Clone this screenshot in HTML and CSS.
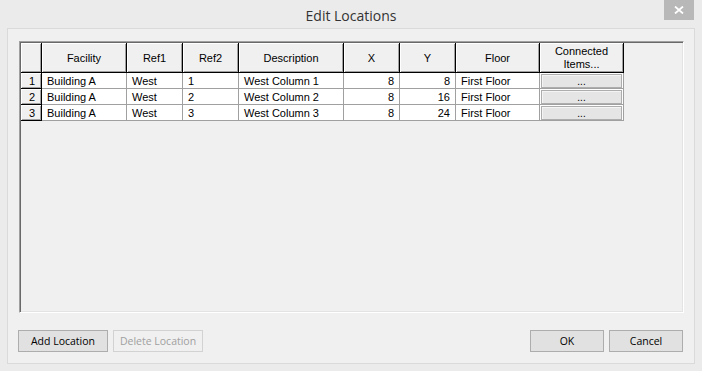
FILE: index.html
```html
<!DOCTYPE html>
<html>
<head>
<meta charset="utf-8">
<link rel="stylesheet" href="styles.css">
</head>
<body>
<div class="window">
  <div class="titlebar">
    <span class="title">Edit Locations</span>
    <div class="close">
      <svg width="10" height="8" viewBox="0 0 10 8"><path d="M1 0.5 L9 7.5 M9 0.5 L1 7.5" stroke="#fff" stroke-width="1.8"/></svg>
    </div>
  </div>
  <div class="client">
    <div class="grid">
      <div class="row head">
        <div class="c rh hc"></div>
        <div class="c w85 hc">Facility</div>
        <div class="c w56 hc">Ref1</div>
        <div class="c w56 hc">Ref2</div>
        <div class="c w105 hc">Description</div>
        <div class="c w56 hc">X</div>
        <div class="c w56 hc">Y</div>
        <div class="c w84 hc">Floor</div>
        <div class="c w84 hc">Connected<br>Items...</div>
      </div>
      <div class="row">
        <div class="c rh rn">1</div>
        <div class="c w85 d">Building A</div>
        <div class="c w56 d">West</div>
        <div class="c w56 d">1</div>
        <div class="c w105 d">West Column 1</div>
        <div class="c w56 d num">8</div>
        <div class="c w56 d num">8</div>
        <div class="c w84 d">First Floor</div>
        <div class="c w84 d bc"><div class="cellbtn">...</div></div>
      </div>
      <div class="row">
        <div class="c rh rn">2</div>
        <div class="c w85 d">Building A</div>
        <div class="c w56 d">West</div>
        <div class="c w56 d">2</div>
        <div class="c w105 d">West Column 2</div>
        <div class="c w56 d num">8</div>
        <div class="c w56 d num">16</div>
        <div class="c w84 d">First Floor</div>
        <div class="c w84 d bc"><div class="cellbtn">...</div></div>
      </div>
      <div class="row">
        <div class="c rh rn">3</div>
        <div class="c w85 d">Building A</div>
        <div class="c w56 d">West</div>
        <div class="c w56 d">3</div>
        <div class="c w105 d">West Column 3</div>
        <div class="c w56 d num">8</div>
        <div class="c w56 d num">24</div>
        <div class="c w84 d">First Floor</div>
        <div class="c w84 d bc"><div class="cellbtn">...</div></div>
      </div>
    </div>
    <div class="buttons">
      <div class="btn wide">Add Location</div>
      <div class="btn wide disabled">Delete Location</div>
      <div class="spacer"></div>
      <div class="btn narrow">OK</div>
      <div class="btn narrow">Cancel</div>
    </div>
  </div>
</div>
</body>
</html>
```
FILE: styles.css
```css
html, body {
  margin: 0;
  padding: 0;
}
body {
  width: 702px;
  height: 371px;
  overflow: hidden;
  background: #ebebeb;
}
.window {
  width: 702px;
  height: 371px;
  background: #ebebeb;
  display: flex;
  flex-direction: column;
  box-sizing: border-box;
}
.titlebar {
  height: 28px;
  flex: none;
  position: relative;
  display: flex;
  justify-content: center;
  align-items: center;
}
.title {
  font-family: "Open Sans", "Noto Sans", sans-serif;
  font-size: 14px;
  color: #333;
  padding-top: 2px;
}
.close {
  position: absolute;
  right: 8px;
  top: 0;
  width: 30px;
  height: 20px;
  background: #b8b8b8;
  display: flex;
  align-items: center;
  justify-content: center;
}
.close svg {
  display: block;
}
.client {
  flex: 1;
  margin: 0 7px 7px 7px;
  border: 1px solid #dadada;
  background: #f0f0f0;
  padding: 12px 10px 11px 10px;
  display: flex;
  flex-direction: column;
}
.grid {
  height: 272px;
  flex: none;
  margin-left: 1px;
  box-sizing: border-box;
  border: 1px solid;
  border-color: #a0a0a0 #ffffff #ffffff #a0a0a0;
  background: #f0f0f0;
  padding: 1px;
  box-shadow: inset 1px 1px 0 #696969, inset -1px -1px 0 #e3e3e3;
  font-family: "Liberation Sans", Arial, sans-serif;
  font-size: 11px;
  color: #000;
}
.row {
  display: flex;
  height: 16px;
}
.row.head {
  height: 30px;
}
.c {
  box-sizing: border-box;
  flex: none;
  height: 100%;
  overflow: hidden;
  white-space: nowrap;
}
.rh { width: 21px; }
.w85 { width: 85px; }
.w56 { width: 56px; }
.w105 { width: 105px; }
.w84 { width: 84px; }
.hc {
  background: #f0f0f0;
  border-right: 1px solid #000;
  border-bottom: 1px solid #000;
  box-shadow: inset 1px 1px 0 #fff, inset -1px -1px 0 #a0a0a0;
  display: flex;
  align-items: center;
  justify-content: center;
  text-align: center;
  line-height: 13px;
  padding-top: 1px;
}
.rn {
  background: #f0f0f0;
  border-right: 1px solid #000;
  border-bottom: 1px solid #000;
  box-shadow: inset 1px 1px 0 #fff, inset -1px -1px 0 #a0a0a0;
  text-align: right;
  padding-right: 6px;
  padding-top: 1px;
  line-height: 14px;
}
.d {
  background: #fff;
  border-right: 1px solid #a0a0a0;
  border-bottom: 1px solid #a0a0a0;
  padding-left: 5px;
  padding-top: 1px;
  line-height: 14px;
}
.d.num {
  text-align: right;
  padding-left: 0;
  padding-right: 5px;
}
.d.bc {
  padding: 1px 1px 0 1px;
}
.cellbtn {
  box-sizing: border-box;
  height: 14px;
  background: #e5e5e5;
  border: 1px solid #adadad;
  box-shadow: inset 1px 1px 0 #f4f4f4;
  text-align: center;
  line-height: 14px;
  font-size: 10px;
}
.buttons {
  margin-top: 17px;
  margin-right: 1px;
  height: 22px;
  display: flex;
  gap: 5px;
}
.spacer {
  flex: 1;
}
.btn {
  box-sizing: border-box;
  height: 22px;
  background: #e1e1e1;
  border: 1px solid #adadad;
  font-family: "Open Sans", "Noto Sans", sans-serif;
  font-size: 10.5px;
  color: #000;
  display: flex;
  align-items: center;
  justify-content: center;
}
.btn.wide { width: 90px; }
.btn.narrow { width: 74px; }
.btn.disabled {
  background: #f0f0f0;
  border-color: #d2d2d2;
  color: #a0a0a0;
}
```
